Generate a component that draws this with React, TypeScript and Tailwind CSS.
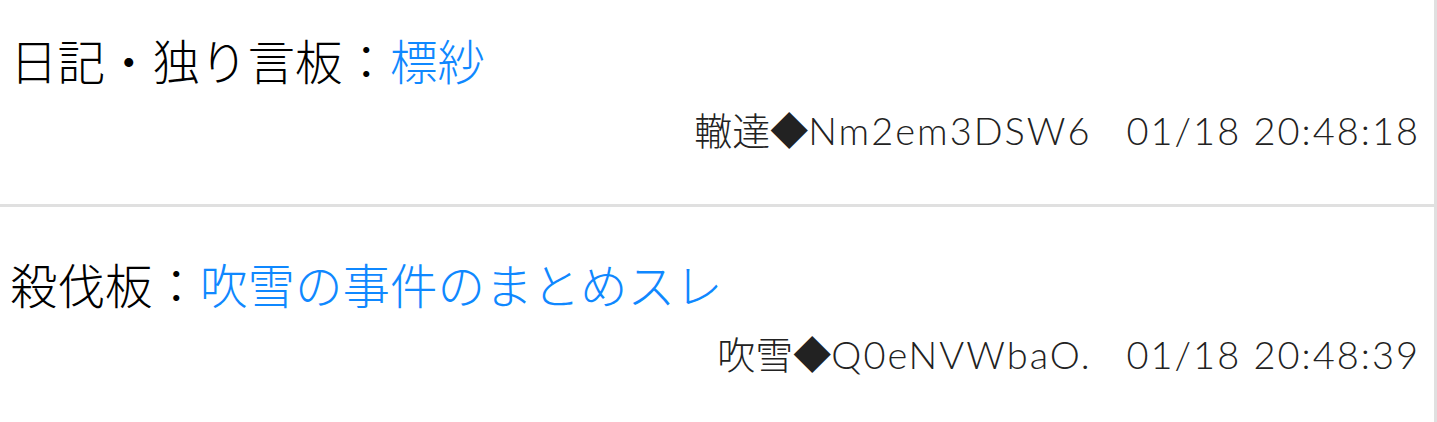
import React from 'react';

type Post = {
  board: string;
  title: string;
  author: string;
  trip: string;
  date: string;
};

const posts: Post[] = [
  {
    board: '日記・独り言板',
    title: '標紗',
    author: '轍達',
    trip: 'Nm2em3DSW6',
    date: '01/18 20:48:18',
  },
  {
    board: '殺伐板',
    title: '吹雪の事件のまとめスレ',
    author: '吹雪',
    trip: 'Q0eNVWbaO.',
    date: '01/18 20:48:39',
  },
];

const font = { fontFamily: 'Lato, "Noto Sans CJK JP", sans-serif' };

const PostRow: React.FC<{ post: Post }> = ({ post }) => {
  return (
    <li className="border-b-[3px] border-[#e0e0e0] pl-[10px] pr-[14px] pt-[51px] pb-[52px]">
      <div className="text-[47.5px] leading-[56px] font-light text-black whitespace-nowrap">
        {post.board}：
        <a href="#" className="text-[#0f88ff]">
          {post.title}
        </a>
      </div>
      <div className="mt-[18px] text-right text-[38px] leading-[44px] font-light text-[#222] whitespace-nowrap">
        <span>{post.author}◆</span>
        <span className="tracking-[2px]">{post.trip}</span>
        <span className="ml-[35px] tracking-[2px]">{post.date}</span>
      </div>
    </li>
  );
};

const App: React.FC = () => {
  return (
    <div
      className="h-[422px] w-[1437px] overflow-hidden bg-white border-r-[3px] border-[#e0e0e0]"
      style={font}
    >
      <ul className="-mt-[17px]">
        {posts.map((post) => (
          <PostRow key={post.trip} post={post} />
        ))}
      </ul>
    </div>
  );
};

export default App;
